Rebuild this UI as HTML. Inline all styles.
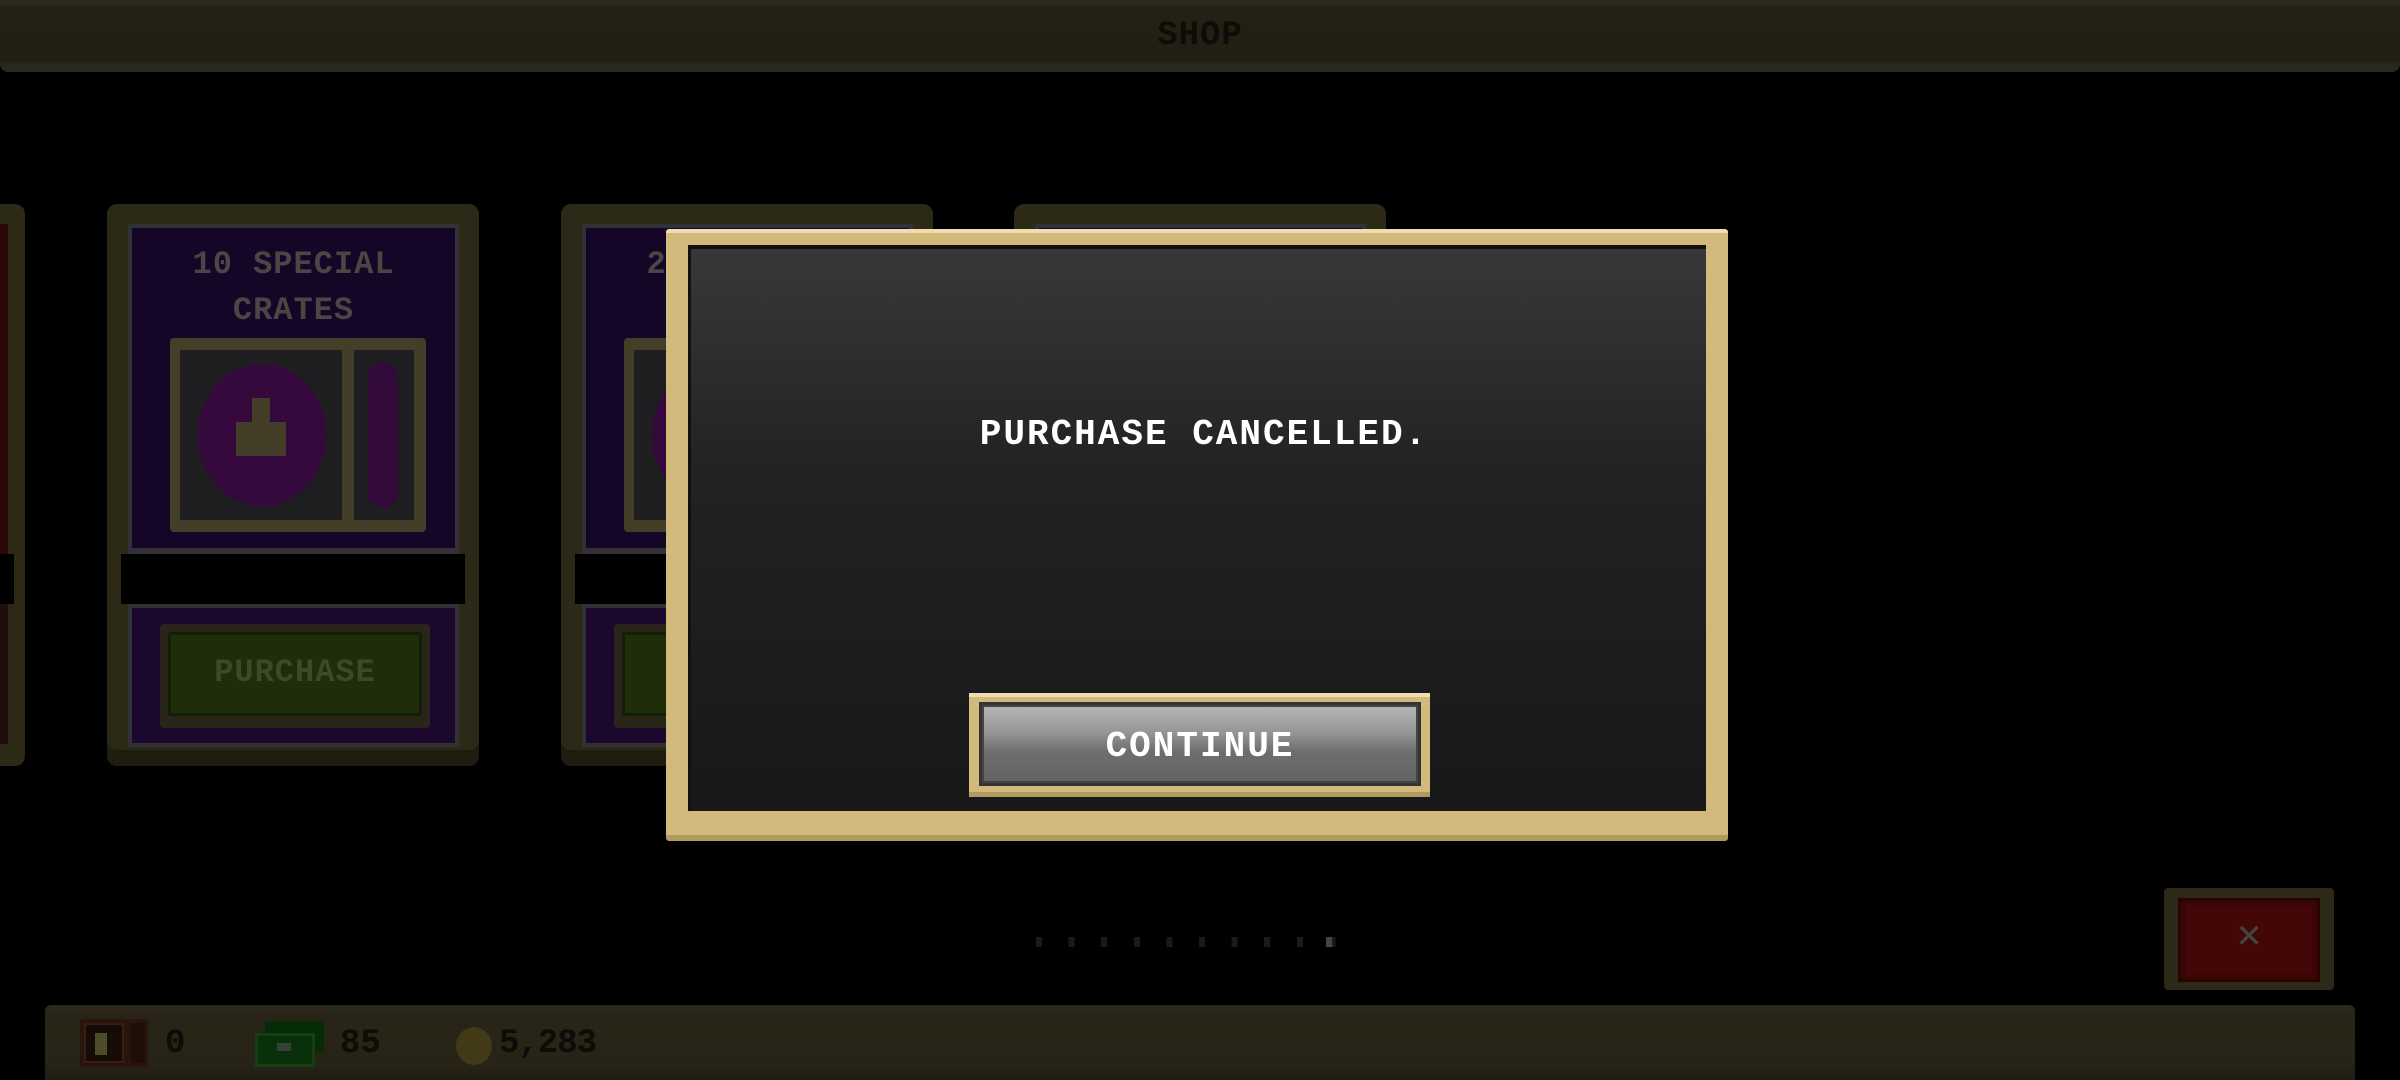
<!DOCTYPE html>
<html><head><meta charset="utf-8"><style>
*{margin:0;padding:0;box-sizing:border-box}
body{width:2400px;height:1080px;background:#000;position:relative;overflow:hidden;font-family:"Liberation Mono",monospace;font-weight:bold}
.abs{position:absolute}
.card{position:absolute;top:204px;width:372px;height:562px;background:#2c2917;border-radius:10px;box-shadow:inset 0 -16px 0 #1f1c10}
.card .top{position:absolute;left:21px;top:20px;width:331px;height:330px;background:#150526;border:4px solid #333138;border-bottom-width:6px}
.card .band{position:absolute;left:14px;top:350px;width:344px;height:50px;background:#000}
.card .bot{position:absolute;left:21px;top:400px;width:331px;height:143px;background:#1c082c;border:4px solid #333138}
.card .btn{position:absolute;left:28px;top:16px;width:270px;height:104px;background:#29251a;border-radius:4px}
.card .btn div{position:absolute;left:8px;top:8px;right:8px;bottom:12px;background:#1f2e0a;border:3px solid #141e05;color:#3a4a2a;font-size:32px;text-align:center;line-height:76px;letter-spacing:1px}
.card .title{position:absolute;left:0;width:100%;text-align:center;color:#4a4646;font-size:32px;line-height:46px;top:14px;letter-spacing:1px}
.crate{position:absolute;left:38px;top:110px;width:256px;height:194px;background:#443e29;border-radius:4px}
.crate .l{position:absolute;left:10px;top:12px;width:162px;height:170px;background:#1e1d20}
.crate .c{position:absolute;left:28px;top:26px;width:128px;height:142px;border-radius:50%;background:#36093e}
.crate .r{position:absolute;left:184px;top:12px;width:60px;height:170px;background:#1e1d20}
.crate .rc{position:absolute;left:198px;top:24px;width:30px;height:146px;border-radius:15px;background:#320b3a}
.txt{color:#fff;font-size:36px;letter-spacing:2px;white-space:nowrap}
</style></head><body>
<div class="abs" style="left:0;top:0;width:2400px;height:72px;background:linear-gradient(#2c2a21 0,#2c2a21 5px,#242014 6px,#231e12 60px,#2b281f 66px,#2b281f 72px);border-radius:0 0 8px 8px"></div>
<div class="abs" style="left:0;top:18px;width:2400px;text-align:center;color:#0f0b08;font-size:34px;line-height:36px;letter-spacing:1px">SHOP</div>

<div class="abs" style="left:-20px;top:204px;width:45px;height:562px;background:#2c2917;border-radius:10px"></div>
<div class="abs" style="left:0;top:224px;width:8px;height:330px;background:#2a0907"></div>
<div class="abs" style="left:0;top:554px;width:14px;height:50px;background:#000"></div>
<div class="abs" style="left:0;top:604px;width:8px;height:140px;background:#1f0e0b"></div>

<div class="card" style="left:107px">
 <div class="top"><div class="title">10 SPECIAL<br>CRATES</div>
  <div class="crate"><div class="l"></div><div class="c"></div><div class="r"></div><div class="rc"></div>
   <div class="abs" style="left:66px;top:84px;width:50px;height:34px;background:#443e29"></div>
   <div class="abs" style="left:82px;top:60px;width:18px;height:24px;background:#443e29"></div></div>
 </div>
 <div class="band"></div>
 <div class="bot"><div class="btn"><div>PURCHASE</div></div></div>
</div>
<div class="card" style="left:561px">
 <div class="top"><div class="title">25 SPECIAL<br>CRATES</div>
  <div class="crate"><div class="l"></div><div class="c"></div><div class="r"></div><div class="rc"></div></div>
 </div>
 <div class="band"></div>
 <div class="bot"><div class="btn"><div>PURCHASE</div></div></div>
</div>
<div class="card" style="left:1014px">
 <div class="top"></div>
 <div class="band"></div>
 <div class="bot"></div>
</div>

<div class="abs" style="left:666px;top:229px;width:1062px;height:612px;background:#d2ba7c;border-top:4px solid #f2dcb2;border-bottom:6px solid #b09a60;border-radius:3px"></div>
<div class="abs" style="left:688px;top:245px;width:1018px;height:566px;background:linear-gradient(#383838 0%,#222 40%,#181818 100%);border-top:4px solid #111;border-left:3px solid #111"></div>
<div class="abs txt" style="left:695px;top:414px;width:1018px;text-align:center">PURCHASE CANCELLED.</div>
<div class="abs" style="left:969px;top:693px;width:461px;height:104px;background:#d2ba7c;border-top:4px solid #f2dcb2;border-bottom:5px solid #b09a60"></div>
<div class="abs" style="left:979px;top:702px;width:442px;height:84px;background:#444;border:3px solid #333"></div>
<div class="abs" style="left:984px;top:707px;width:432px;height:74px;background:linear-gradient(#b4b4b4 0%,#959595 35%,#6e6e6e 60%,#646464 100%)"></div>
<div class="abs txt" style="left:979px;top:726px;width:442px;text-align:center">CONTINUE</div>

<div class="abs" style="left:1036px;top:937px;width:300px;height:10px;background:repeating-linear-gradient(90deg,#1a1a1a 0 6px,transparent 6px 32.6px)"></div>
<div class="abs" style="left:1326px;top:937px;width:6px;height:10px;background:#444"></div>

<div class="abs" style="left:2164px;top:888px;width:170px;height:102px;background:#2c2919;border-radius:4px"></div>
<div class="abs" style="left:2178px;top:898px;width:142px;height:84px;background:#3a0404;border:3px solid #2a0303"></div>
<div class="abs" style="left:2186px;top:905px;width:126px;height:70px;background:#430707"></div>
<div class="abs" style="left:2164px;top:916px;width:170px;text-align:center;color:#444;font-size:40px;line-height:44px;font-weight:normal">✕</div>

<div class="abs" style="left:45px;top:1005px;width:2310px;height:75px;background:linear-gradient(#2c291c 0,#2c291c 6px,#282417 8px,#272316 60px,#201d12 75px);border-radius:6px 6px 0 0"></div>
<div class="abs" style="left:80px;top:1019px;width:68px;height:48px;background:#2a150c"></div>
<div class="abs" style="left:84px;top:1023px;width:40px;height:40px;background:#150c08;border:2px solid #361e10"></div>
<div class="abs" style="left:95px;top:1033px;width:12px;height:22px;background:#4c4c28"></div>
<div class="abs" style="left:131px;top:1023px;width:14px;height:40px;background:#1e0e08"></div>
<div class="abs" style="left:165px;top:1028px;color:#0f0b08;font-size:34px;line-height:32px">0</div>
<div class="abs" style="left:265px;top:1021px;width:59px;height:32px;background:#072a07"></div>
<div class="abs" style="left:255px;top:1033px;width:60px;height:34px;background:#08300b;border:3px solid #124012"></div>
<div class="abs" style="left:277px;top:1043px;width:14px;height:8px;background:#364236"></div>
<div class="abs" style="left:340px;top:1028px;color:#0f0b08;font-size:34px;line-height:32px">85</div>
<div class="abs" style="left:456px;top:1027px;width:36px;height:38px;border-radius:50%;background:#423a17"></div>
<div class="abs" style="left:499px;top:1028px;color:#0f0b08;font-size:34px;line-height:32px;letter-spacing:-1px">5,283</div>
</body></html>
